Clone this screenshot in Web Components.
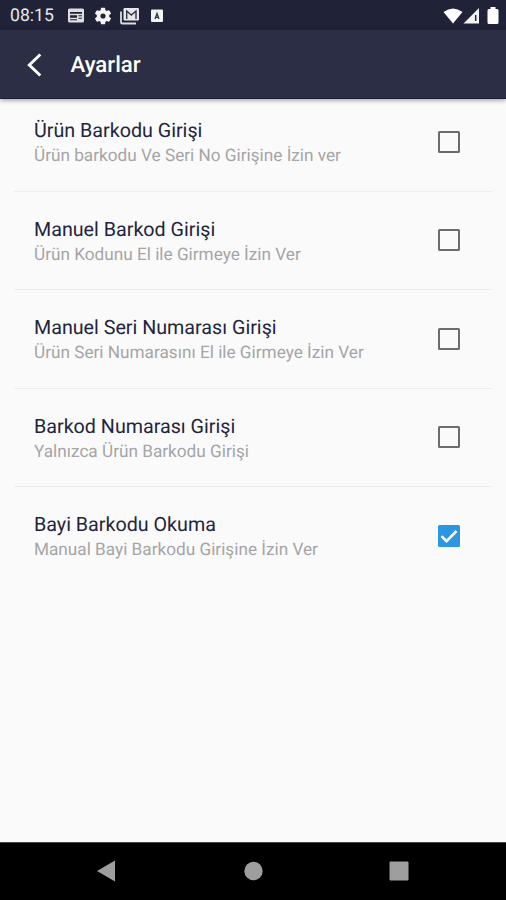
<!DOCTYPE html>
<html lang="tr">
<head>
<meta charset="utf-8">
<title>Ayarlar</title>
<style>
html,body{margin:0;height:100%;overflow:hidden;background:#fafafa}
body{font-family:Roboto,"Liberation Sans",sans-serif;text-rendering:geometricPrecision}
</style>
</head>
<body>
<settings-app></settings-app>
<script>
const define = (name, html, setup) => customElements.define(name, class extends HTMLElement {
  constructor() {
    super();
    const t = document.createElement('template');
    t.innerHTML = html;
    this.attachShadow({mode: 'open'}).append(t.content.cloneNode(true));
  }
  connectedCallback() { if (setup) setup(this); }
});

define('status-bar', `
<style>
:host{display:flex;align-items:center;height:30px;background:#202338;color:#e9e9ed;padding:1px 7px 0 10px;box-sizing:border-box}
.time{font-size:17.6px;width:57px;white-space:nowrap;margin-top:1px}
.left,.right{display:flex;align-items:center}
.right{margin-left:auto}
svg{display:block}
</style>
<span class="time">08:15</span>
<div class="left">
<svg width="18" height="18" viewBox="0 0 18 18"><rect x="1" y="1.5" width="16" height="14" rx="1.5" fill="#dedee2"/><path d="M3 5h12v1.800H3zM3 8.300h7v2.400H3zM11.500 8.300H15v1h-3.500zM11.500 10.700H15v1h-3.500zM3 12.300h7v1H3z" fill="#202338"/></svg>
<svg style="margin-left:9px" width="18" height="18" viewBox="1.500 1.500 21 21"><path fill="#f4f4f6" d="M19.14 12.94c.04-.3.06-.61.06-.94 0-.32-.02-.64-.07-.94l2.03-1.58a.49.49 0 0 0 .12-.61l-1.92-3.32a.49.49 0 0 0-.59-.22l-2.39.96c-.5-.38-1.03-.7-1.62-.94l-.36-2.54a.48.48 0 0 0-.48-.41h-3.84a.48.48 0 0 0-.47.41l-.36 2.54c-.59.24-1.13.57-1.62.94l-2.39-.96a.48.48 0 0 0-.59.22L2.74 8.87a.48.48 0 0 0 .12.61l2.03 1.58c-.05.3-.09.63-.09.94s.02.64.07.94l-2.03 1.58a.49.49 0 0 0-.12.61l1.92 3.32c.12.22.37.29.59.22l2.39-.96c.5.38 1.03.7 1.62.94l.36 2.54c.05.24.24.41.48.41h3.84c.24 0 .44-.17.47-.41l.36-2.54c.59-.24 1.13-.56 1.62-.94l2.39.96c.22.08.47 0 .59-.22l1.92-3.32a.48.48 0 0 0-.12-.61zM12 15a3 3 0 1 1 0-6 3 3 0 0 1 0 6z"/></svg>
<svg style="margin-left:8px" width="20" height="18" viewBox="0 0 20 18"><path d="M1 4.500v10.700q0 1.300 1.300 1.300H16" fill="none" stroke="#dcdce1" stroke-width="1.800"/><rect x="3.500" y="1" width="15.500" height="12.500" rx="1.200" fill="#e8e8ec"/><path d="M6.700 12V4l4.600 4L16 4v8" fill="none" stroke="#30334a" stroke-width="1.400"/></svg>
<svg style="margin-left:10px" width="14" height="14" viewBox="0 0 14 14"><rect x="1" y=".5" width="12" height="12.500" rx="1" fill="#f3f3f5"/><path d="M5 10 7 4.500 9 10M5.500 8.300h3" fill="none" stroke="#30334a" stroke-width="1.300"/></svg>
</div>
<div class="right">
<svg width="20" height="16" viewBox="0 0 20 16"><path d="M.5 4Q10-3 19.500 4L10 15.500Z" fill="#fff"/></svg>
<svg width="17" height="16" viewBox="0 0 17 16"><path d="M.5 15.500 16 0v15.500Z" fill="#f3f3f5"/><path d="M12.700 7v6" stroke="#202338" stroke-width="1.500"/></svg>
<svg style="margin-left:7px" width="12" height="18" viewBox="0 0 12 18"><path d="M3.500 0h5v2H10q1.500 0 1.500 1.500v12Q11.500 17 10 17H2Q.5 17 .5 15.500v-12Q.5 2 2 2h1.500z" fill="#fff"/></svg>
</div>`);

define('app-bar', `
<style>
:host{display:flex;align-items:center;height:69px;background:#2b2e45;color:#fff;padding-left:26px;box-sizing:border-box;border-bottom:1px solid #1d2039;box-shadow:0 1px 5px rgba(0,0,0,.42);position:relative;z-index:1}
svg{display:block;margin-top:1px}
h1{margin:2px 0 0 27.500px;font-size:22.2px;font-weight:500;line-height:28px;white-space:nowrap}
</style>
<svg width="17" height="26" viewBox="0 0 17 26"><path d="M14.300 2.500 3.300 13l11 10.500" fill="none" stroke="#fff" stroke-width="2.900"/></svg>
<h1><slot></slot></h1>`);

define('check-box', `
<style>
:host{display:block;width:22px;height:22px;box-sizing:border-box;border:2px solid #6c6c6c;border-radius:1.500px}
:host([checked]){border:0;background:#2c96e0}
svg{display:none}
:host([checked]) svg{display:block}
</style>
<svg width="22" height="22" viewBox="0 0 22 22"><path d="m3.500 11.200 5 5L18.500 6" fill="none" stroke="#fff" stroke-width="2.500"/></svg>`);

define('setting-row', `
<style>
:host{display:flex;justify-content:space-between;height:98.5px;box-sizing:border-box;margin:0 14px;padding:25px 32px 0 20px;border-bottom:1px solid #ededed}
:host(:last-of-type){border-bottom-color:transparent}
.title,.sub{display:block;white-space:nowrap}
.title{font-size:19.7px;line-height:25px;color:#23253d}
.sub{margin-top:1px;font-size:17.2px;line-height:25px;color:#a5a5a7}
check-box{margin-top:12.500px}
</style>
<div><span class="title"><slot name="title"></slot></span><span class="sub"><slot></slot></span></div>
<check-box></check-box>`, el => {
  el.shadowRoot.querySelector('check-box').toggleAttribute('checked', el.hasAttribute('checked'));
});

define('nav-bar', `
<style>
:host{display:flex;align-items:center;justify-content:space-between;height:58px;background:#000;padding:0 97px 1px 96px;box-sizing:border-box;border-top:1px solid #444}
svg{display:block;fill:#9e9e9e}
</style>
<svg width="20" height="22" viewBox="0 0 20 22"><path d="M1 11 19 .5v21z"/></svg>
<svg width="20" height="20" viewBox="0 0 20 20"><circle cx="10.500" cy="10" r="9.200"/></svg>
<svg width="20" height="20" viewBox="0 0 20 20"><rect x=".5" y=".5" width="19" height="19" rx="1"/></svg>`);

define('settings-app', `
<style>
:host{display:flex;flex-direction:column;width:506px;height:900px;background:#fafafa}
main{flex:1;min-height:0}
setting-row:first-child{margin-top:-6px}
</style>
<status-bar></status-bar>
<app-bar>Ayarlar</app-bar>
<main>
<setting-row><span slot="title">Ürün Barkodu Girişi</span>Ürün barkodu Ve Seri No Girişine İzin ver</setting-row>
<setting-row><span slot="title">Manuel Barkod Girişi</span>Ürün Kodunu El ile Girmeye İzin Ver</setting-row>
<setting-row><span slot="title">Manuel Seri Numarası Girişi</span>Ürün Seri Numarasını El ile Girmeye İzin Ver</setting-row>
<setting-row><span slot="title">Barkod Numarası Girişi</span>Yalnızca Ürün Barkodu Girişi</setting-row>
<setting-row checked><span slot="title">Bayi Barkodu Okuma</span>Manual Bayi Barkodu Girişine İzin Ver</setting-row>
</main>
<nav-bar></nav-bar>`);
</script>
</body>
</html>
